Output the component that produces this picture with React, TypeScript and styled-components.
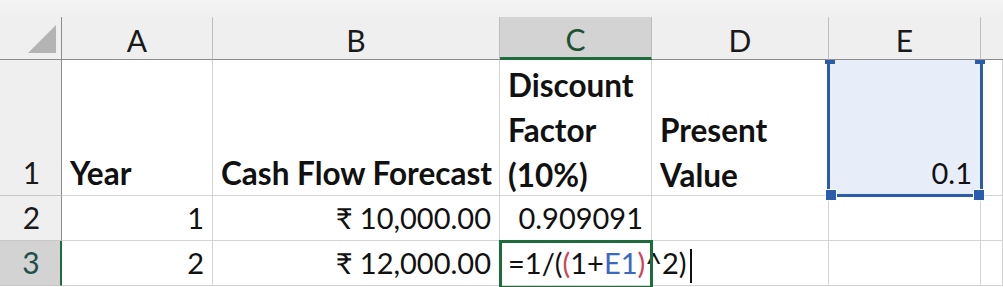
import React from 'react';
import styled, { createGlobalStyle } from 'styled-components';

const GlobalStyle = createGlobalStyle`
    html, body {
        margin     : 0;
        padding    : 0;
        background : #ffffff;
        overflow   : hidden;
    }
    body {
        font-family : Lato, "Liberation Sans", sans-serif;
        color       : #111;
    }
`

const columns = ['A', 'B', 'C', 'D', 'E', '']

type Align = 'left' | 'right'

const App: React.FC = () => {
    return (
        <Sheet>
            <GlobalStyle />
            <TopStrip />
            <Grid>
                <Corner>
                    <CornerTriangle />
                </Corner>
                {columns.map((c, i) => (
                    <ColHeader key={i} $selected={c === 'C'} $last={i === columns.length - 1}>
                        {c}
                    </ColHeader>
                ))}

                <RowHeader>1</RowHeader>
                <Cell $bold>Year</Cell>
                <Cell $bold>Cash Flow Forecast</Cell>
                <Cell $bold>
                    <Lines>
                        <span>Discount</span>
                        <span>Factor</span>
                        <span>(10%)</span>
                    </Lines>
                </Cell>
                <Cell $bold>
                    <Lines>
                        <span>Present</span>
                        <span>Value</span>
                    </Lines>
                </Cell>
                <Cell $align="right" $range>
                    0.1
                    <RangeBox>
                        <Handle $pos="tl" />
                        <Handle $pos="tr" />
                        <Handle $pos="bl" />
                        <Handle $pos="br" />
                    </RangeBox>
                </Cell>
                <Cell />

                <RowHeader>2</RowHeader>
                <Cell $align="right">1</Cell>
                <Cell $align="right">₹ 10,000.00</Cell>
                <Cell $align="right">0.909091</Cell>
                <Cell />
                <Cell />
                <Cell />

                <RowHeader $selected>3</RowHeader>
                <Cell $align="right">2</Cell>
                <Cell $align="right">₹ 12,000.00</Cell>
                <Cell $editing>
                    <Formula>
                        =1/(<Ref $color="#d0435a">(</Ref>1+<Ref $color="#3a68c2">E1</Ref><Ref $color="#d0435a">)</Ref>^2)
                        <Caret />
                    </Formula>
                    <ActiveBox />
                </Cell>
                <Cell />
                <Cell />
                <Cell />
            </Grid>
        </Sheet>
    );
}

export default App;

const Sheet = styled.div`
    width      : 1003px;
    height     : 287px;
    overflow   : hidden;
    background : #fff;
`

const TopStrip = styled.div`
    height     : 17px;
    background : linear-gradient(#f4f4f4, #efefef);
`

const Grid = styled.div`
    display               : grid;
    grid-template-columns : 62px 151px 287px 152px 177px 152px 1fr;
    grid-template-rows    : 43px 136px 45px 45px;
    font-size             : 29px;
`

const Corner = styled.div`
    position      : relative;
    background    : #efefef;
    border-right  : 1px solid #8c8c8c;
    border-bottom : 1px solid #8c8c8c;
`

const CornerTriangle = styled.div`
    position   : absolute;
    left       : 28px;
    top        : 8px;
    width      : 28px;
    height     : 28px;
    background : #b4b4b4;
    clip-path  : polygon(100% 0, 100% 100%, 0 100%);
`

const ColHeader = styled.div<{ $selected?: boolean; $last?: boolean }>`
    display         : flex;
    align-items     : center;
    justify-content : center;
    padding-top     : 4px;
    box-sizing      : border-box;
    font-size       : 30px;
    background      : ${p => (p.$selected ? '#d3d3d3' : '#efefef')};
    color           : ${p => (p.$selected ? '#1d5133' : '#1a1a1a')};
    border-right    : ${p => (p.$last ? 'none' : '1px solid #bdbdbd')};
    border-bottom   : ${p => (p.$selected ? '3px solid #1e6b3c' : '1px solid #8c8c8c')};
`

const RowHeader = styled.div<{ $selected?: boolean }>`
    display         : flex;
    align-items     : flex-end;
    justify-content : center;
    padding-bottom  : 5px;
    padding-left    : 2px;
    box-sizing      : border-box;
    font-size       : 30px;
    background      : ${p => (p.$selected ? '#d3d3d3' : '#efefef')};
    color           : ${p => (p.$selected ? '#1f4f4a' : '#1a1a1a')};
    border-bottom   : 1px solid #c8c8c8;
    border-right    : ${p => (p.$selected ? '2px solid #1e6b3c' : '1px solid #8c8c8c')};
`

const Cell = styled.div<{ $align?: Align; $bold?: boolean; $range?: boolean; $editing?: boolean }>`
    position        : relative;
    display         : flex;
    align-items     : flex-end;
    justify-content : ${p => (p.$align === 'right' ? 'flex-end' : 'flex-start')};
    padding         : 0 8px ${p => (p.$bold ? '3px' : '5px')} 8px;
    box-sizing      : border-box;
    white-space     : nowrap;
    font-weight     : ${p => (p.$bold ? 700 : 400)};
    font-size       : ${p => (p.$bold ? '31.5px' : '29px')};
    background      : ${p => (p.$range ? '#e7eefa' : '#ffffff')};
    border-right    : 1px solid #d4d4d4;
    border-bottom   : 1px solid #d4d4d4;
    overflow        : visible;
    z-index         : ${p => (p.$editing || p.$range ? 2 : 1)};
`

const Lines = styled.div`
    display        : flex;
    flex-direction : column;
    line-height    : 45px;
    margin-bottom  : -6px;
`

const RangeBox = styled.div`
    position       : absolute;
    left           : -2px;
    right          : -3px;
    top            : 0;
    bottom         : -2px;
    border         : 3px solid #2a5cab;
    border-top     : none;
    pointer-events : none;
`

const Handle = styled.div<{ $pos: 'tl' | 'tr' | 'bl' | 'br' }>`
    position   : absolute;
    width      : 10px;
    height     : ${p => (p.$pos[0] === 't' ? '4px' : '10px')};
    background : #2a5cab;
    border     : ${p => (p.$pos[0] === 'b' ? '1px solid #fff' : 'none')};
    ${p => (p.$pos[0] === 't' ? 'top: 0;' : 'bottom: -7px;')}
    ${p => (p.$pos[1] === 'l' ? 'left: -5px;' : 'right: -5px;')}
`

const ActiveBox = styled.div`
    position       : absolute;
    left           : -1px;
    right          : -2px;
    top            : -1px;
    bottom         : -4px;
    border         : 3px solid #1e6b3c;
    pointer-events : none;
`

const Formula = styled.span`
    display     : inline-flex;
    align-items : flex-end;
`

const Ref = styled.span<{ $color: string }>`
    color : ${p => p.$color};
`

const Caret = styled.span`
    display       : inline-block;
    width         : 2px;
    height        : 34px;
    margin-left   : 3px;
    margin-bottom : -3px;
    background    : #111;
`
